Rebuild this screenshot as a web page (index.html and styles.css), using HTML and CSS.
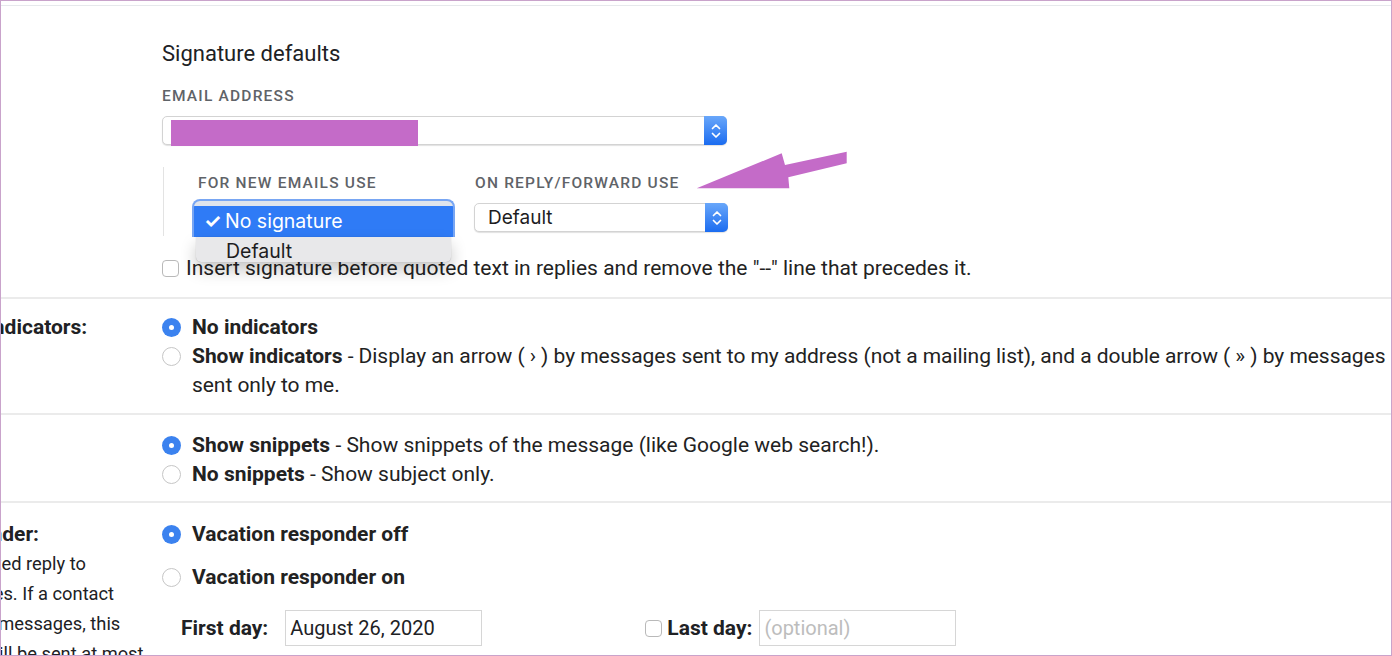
FILE: index.html
```html
<!DOCTYPE html>
<html lang="en">
<head>
    <meta charset="UTF-8">
    <meta name="viewport" content="width=device-width, initial-scale=1.0">
    <title>Settings - General</title>
    <link rel="stylesheet" href="styles.css">
</head>
<body>

<div class="frame">
    <div class="tabs-edge"></div>

    <div class="settings">

        <!-- Signature -->
        <section class="row">
            <div class="label"></div>
            <div class="value sig-value">
                <h3 class="sig-title">Signature defaults</h3>
                <div class="field-label">Email address</div>
                <div class="select select-wide">
                    <span class="select-text"><span class="redact"></span></span>
                    <span class="stepper">
                        <svg width="12" height="20" viewBox="0 0 12 20"><path d="M2.5 7.5 L6 4 L9.5 7.5 M2.5 12.5 L6 16 L9.5 12.5" fill="none" stroke="#fff" stroke-width="1.7" stroke-linecap="round" stroke-linejoin="round"/></svg>
                    </span>
                </div>

                <div class="sig-defaults">
                    <div class="sig-col col-new">
                        <div class="field-label">For new emails use</div>
                        <div class="select select-open">
                            <span class="select-text">No signature</span>
                            <span class="stepper"></span>
                            <div class="menu">
                                <div class="menu-head">
                                    <div class="menu-item selected"><span class="tick">✓</span>No signature</div>
                                </div>
                                <div class="menu-body">
                                    <div class="menu-item">Default</div>
                                </div>
                            </div>
                        </div>
                    </div>
                    <div class="sig-col col-reply">
                        <div class="field-label">On reply/forward use</div>
                        <div class="select">
                            <span class="select-text">Default</span>
                            <span class="stepper">
                                <svg width="12" height="20" viewBox="0 0 12 20"><path d="M2.5 7.5 L6 4 L9.5 7.5 M2.5 12.5 L6 16 L9.5 12.5" fill="none" stroke="#fff" stroke-width="1.7" stroke-linecap="round" stroke-linejoin="round"/></svg>
                            </span>
                        </div>
                    </div>
                </div>

                <label class="check-row">
                    <span class="checkbox"></span>
                    Insert signature before quoted text in replies and remove the "--" line that precedes it.
                </label>

                <!-- highlight arrow pointing at the reply/forward field -->
                <svg class="note-arrow" width="165" height="47" viewBox="0 0 165 47">
                    <polygon points="6.7,40.3 91.7,5.3 95,17 156.7,3.7 156.7,15.3 98.3,29.3 99.3,40.3" fill="#c46bc8"/>
                </svg>
            </div>
        </section>

        <!-- Personal level indicators -->
        <section class="row">
            <div class="label"><b>Personal level indicators:</b></div>
            <div class="value">
                <div class="option">
                    <span class="radio checked"></span>
                    <span><b>No indicators</b></span>
                </div>
                <div class="option">
                    <span class="radio"></span>
                    <span class="long-text"><b>Show indicators</b> - Display an arrow ( › ) by messages sent to my address (not a mailing list), and a double arrow ( » ) by messages<br>sent only to me.</span>
                </div>
            </div>
        </section>

        <!-- Snippets -->
        <section class="row row-snippets">
            <div class="label"><b>Snippets:</b></div>
            <div class="value">
                <div class="option">
                    <span class="radio checked"></span>
                    <span><b>Show snippets</b> - Show snippets of the message (like Google web search!).</span>
                </div>
                <div class="option">
                    <span class="radio"></span>
                    <span><b>No snippets</b> - Show subject only.</span>
                </div>
            </div>
        </section>

        <!-- Vacation responder -->
        <section class="row row-last">
            <div class="label">
                <b>Vacation responder:</b>
                <p class="label-note">(sends an automated reply to<br>incoming messages. If a contact<br>sends you several messages, this<br>automated reply will be sent at most<br>once every 4 days)</p>
            </div>
            <div class="value">
                <div class="option">
                    <span class="radio checked"></span>
                    <span><b>Vacation responder off</b></span>
                </div>
                <div class="option option-on">
                    <span class="radio"></span>
                    <span><b>Vacation responder on</b></span>
                </div>
                <div class="dates">
                    <b class="date-label">First day:</b>
                    <input class="date-input first-input" type="text" value="August 26, 2020">
                    <span class="checkbox last-check"></span>
                    <b class="date-label last-label">Last day:</b>
                    <input class="date-input" type="text" placeholder="(optional)">
                </div>
            </div>
        </section>

    </div>
</div>

</body>
</html>
```

FILE: styles.css
```css
body {
    margin: 0;
    background-color: #fff;
    font-family: Roboto, Arial, sans-serif;
    color: #202124;
}

.frame {
    width: 1392px;
    height: 656px;
    box-sizing: border-box;
    border: 1px solid #c9a3cb;
    overflow: hidden;
    position: relative;
    background-color: #fff;
}

.tabs-edge {
    height: 4px;
    border-bottom: 1px solid #e6e9ec;
}

/* label column is wider than the visible area, it starts off to the left */
.settings {
    margin-left: -152px;
}

.row {
    display: grid;
    grid-template-columns: 313px 1fr;
    border-bottom: 2px solid #ebebeb;
    padding: 14px 0 13px;
    font-size: 21px;
    line-height: 29px;
}

.row-snippets {
    padding: 16px 0 12px;
}

.row-last {
    border-bottom: none;
    padding-top: 17px;
}

.label b {
    font-weight: 700;
}

.label-note {
    margin: 0;
    font-size: 18.3px;
    line-height: 30px;
    color: #202124;
}

.value {
    padding-right: 4px;
}

/* ---- signature block ---- */

.sig-value {
    position: relative;
    padding-top: 22px;
    padding-bottom: 4px;
}

.sig-title {
    margin: 0 0 20px;
    font-size: 22px;
    line-height: 24px;
    font-weight: 400;
    color: #202124;
}

.field-label {
    font-size: 15.5px;
    line-height: 20px;
    letter-spacing: 1.2px;
    text-transform: uppercase;
    color: #5f6368;
    font-weight: 500;
    margin-bottom: 10px;
}

.select {
    display: flex;
    height: 29px;
    box-sizing: border-box;
    border: 1px solid #d3d3d3;
    border-radius: 5px;
    background-color: #fff;
    box-shadow: 0 1px 1px rgba(0, 0, 0, 0.12);
    position: relative;
    font-family: Inter, "Open Sans", sans-serif;
    font-size: 19px;
    line-height: 27px;
}

.select-wide {
    width: 565px;
}

.select-text {
    flex: 1;
    padding-left: 13px;
    color: #1d1d1f;
    position: relative;
}

.redact {
    position: absolute;
    left: 8px;
    top: 3px;
    width: 247px;
    height: 26px;
    background-color: #c46bc8;
}

.stepper {
    width: 23px;
    margin: -1px -1px -1px 0;
    border-radius: 0 5px 5px 0;
    background: linear-gradient(#69a7fa, #1b6cf0);
    display: flex;
    align-items: center;
    justify-content: center;
}

.sig-defaults {
    display: flex;
    gap: 21px;
    margin-top: 22px;
    margin-left: 1px;
    padding: 6px 0 4px 31px;
    border-left: 1px solid #e3e3e3;
}

.sig-defaults .field-label {
    margin-bottom: 10px;
}

.col-new {
    width: 258px;
}

.col-new .field-label {
    margin-left: 3px;
}

.col-reply {
    width: 254px;
}

.col-reply .field-label {
    margin-left: 1px;
}

.select-open {
    border-color: #8db3f4;
}

/* open popup of the first select */
.menu {
    position: absolute;
    top: -5px;
    left: -4px;
    width: 263px;
    z-index: 2;
    font-size: 19.5px;
}

.menu-head {
    border: 2px solid #78a6f3;
    border-bottom: none;
    border-radius: 8px 8px 0 0;
    padding-top: 5px;
    background-color: #dfe4ec;
    overflow: hidden;
}

.menu-body {
    margin: 0 4px;
    background-color: #e8e8ea;
    border-radius: 0 0 5px 5px;
    box-shadow: 0 8px 16px rgba(0, 0, 0, 0.22), 0 0 1px rgba(0, 0, 0, 0.3);
}

.menu-item {
    height: 25px;
    line-height: 29px;
    padding-left: 30px;
    color: #1d1d1f;
}

.menu-item.selected {
    height: 31px;
    line-height: 30px;
    padding-left: 10px;
    background-color: #2f7bf6;
    color: #fff;
}

.tick {
    display: inline-block;
    width: 21px;
    font-weight: 700;
}

.check-row {
    display: flex;
    align-items: center;
    margin-top: 20px;
    line-height: 24px;
    color: #222;
}

.checkbox {
    display: inline-block;
    width: 15px;
    height: 15px;
    border: 1px solid #b9b9b9;
    border-radius: 4px;
    background-color: #fff;
    margin-right: 7px;
    flex-shrink: 0;
}

.note-arrow {
    position: absolute;
    left: 528px;
    top: 128px;
}

/* ---- radio options ---- */

.option {
    display: flex;
    align-items: flex-start;
    color: #222;
}

.long-text {
    letter-spacing: -0.05px;
    white-space: nowrap;
}

.radio {
    width: 19px;
    height: 19px;
    box-sizing: border-box;
    border-radius: 50%;
    border: 1px solid #c6c6c6;
    background-color: #fff;
    margin: 5px 11px 0 0;
    flex-shrink: 0;
    position: relative;
}

.radio.checked {
    border: none;
    background-color: #3b82ef;
}

.radio.checked::after {
    content: "";
    position: absolute;
    left: 7px;
    top: 7px;
    width: 5px;
    height: 5px;
    border-radius: 50%;
    background-color: #fff;
}

.option-on {
    margin-top: 14px;
}

.dates {
    display: flex;
    align-items: center;
    margin-top: 18px;
    padding-left: 19px;
}

.date-label {
    margin-right: 17px;
}

.date-input {
    width: 197px;
    height: 36px;
    box-sizing: border-box;
    border: 1px solid #d6d6d6;
    padding: 0 4px;
    font-family: Roboto, Arial, sans-serif;
    font-size: 20px;
    color: #202124;
}

.date-input::placeholder {
    color: #bdbdbd;
}

.first-input {
    margin-right: 163px;
}

.last-check {
    margin-right: 5px;
}

.last-label {
    margin-right: 7px;
}
```
